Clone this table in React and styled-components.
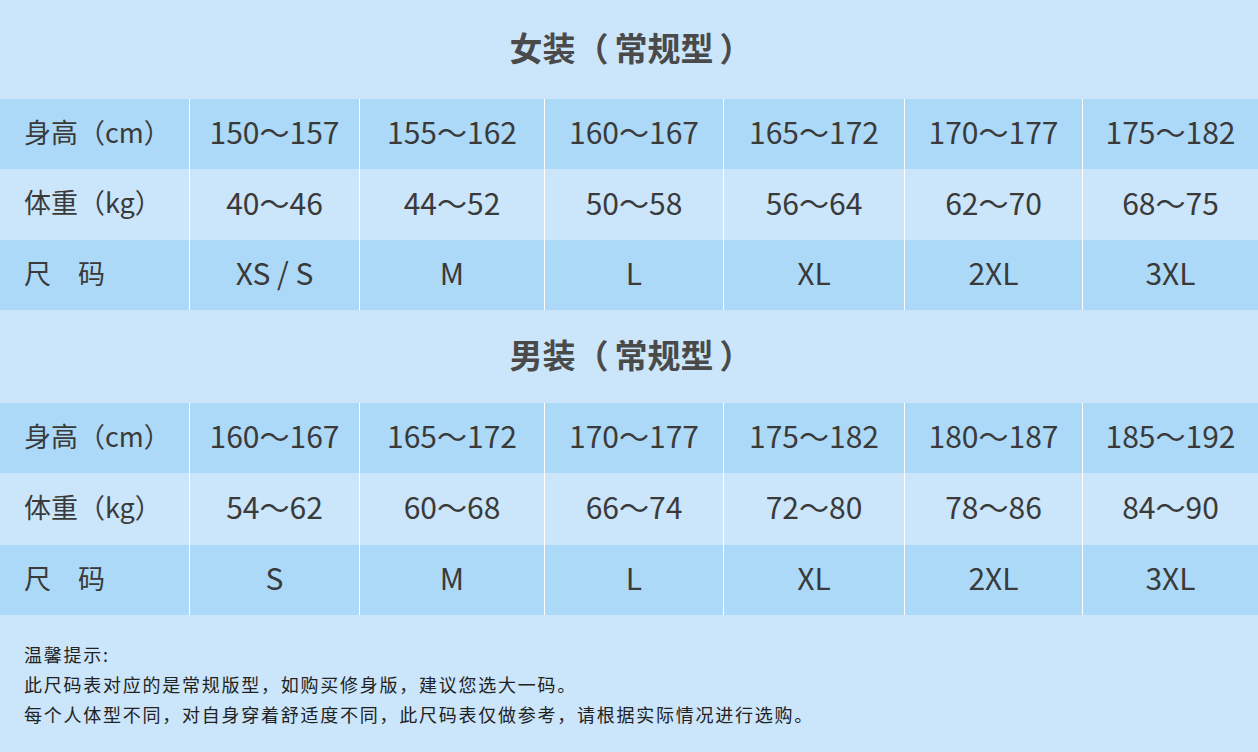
import React from 'react';
import styled, { createGlobalStyle } from 'styled-components';

const GlobalStyle = createGlobalStyle`
  html, body {
    margin: 0;
    padding: 0;
    background-color: #cbe5fa;
  }
  body {
    font-family: "Noto Sans CJK SC", "Noto Sans", sans-serif;
  }
`;

const Page = styled.div`
  width: 1258px;
  height: 752px;
  background-color: #cbe5fa;
  color: #3a3a3a;
  overflow: hidden;
`;

const SectionTitle = styled.h2`
  margin: 0;
  height: ${(p) => p.h}px;
  display: flex;
  align-items: center;
  justify-content: center;
  font-size: 33px;
  font-weight: 700;
  color: #4a4a4a;
  padding: 0 0 5px 4px;
  box-sizing: border-box;
`;

const Paren = styled.span`
  margin: ${(p) => (p.open ? '0 6px 0 0' : '0 0 0 6px')};
`;

const Table = styled.div`
  display: grid;
  grid-template-columns: 189px 170px 185px 179px 181px 178px 1fr;
  grid-auto-rows: ${(p) => p.rows};
`;

const Cell = styled.div`
  display: flex;
  align-items: center;
  justify-content: center;
  box-sizing: border-box;
  padding-bottom: 6px;
  background-color: ${(p) => (p.dark ? '#add9f8' : '#cbe5fa')};
  border-left: 1px solid #ffffff;
  font-size: 30px;
  color: #3a3a3a;
  white-space: nowrap;
`;

const LabelCell = styled(Cell)`
  justify-content: flex-start;
  padding-left: 24px;
  border-left: none;
  font-size: 27px;
`;

const Notes = styled.div`
  padding: 24px 0 0 24px;
  font-size: 18px;
  line-height: 30px;
  letter-spacing: 1.75px;
  color: #222222;
`;

const NoteLine = styled.p`
  margin: 0;
`;

const women = [
  { label: '身高（cm）', values: ['150～157', '155～162', '160～167', '165～172', '170～177', '175～182'] },
  { label: '体重（kg）', values: ['40～46', '44～52', '50～58', '56～64', '62～70', '68～75'] },
  { label: '尺　码', values: ['XS / S', 'M', 'L', 'XL', '2XL', '3XL'] },
];

const men = [
  { label: '身高（cm）', values: ['160～167', '165～172', '170～177', '175～182', '180～187', '185～192'] },
  { label: '体重（kg）', values: ['54～62', '60～68', '66～74', '72～80', '78～86', '84～90'] },
  { label: '尺　码', values: ['S', 'M', 'L', 'XL', '2XL', '3XL'] },
];

const SizeTable = ({ data, rows }) => (
  <Table rows={rows}>
    {data.map((row, i) => (
      <React.Fragment key={row.label}>
        <LabelCell dark={i !== 1}>{row.label}</LabelCell>
        {row.values.map((v, j) => (
          <Cell key={j} dark={i !== 1}>
            {v}
          </Cell>
        ))}
      </React.Fragment>
    ))}
  </Table>
);

const Title = ({ h, children }) => (
  <SectionTitle h={h}>
    {children}
    <Paren open>（</Paren>常规型<Paren>）</Paren>
  </SectionTitle>
);

export default function App() {
  return (
    <Page>
      <GlobalStyle />
      <Title h={99}>女装</Title>
      <SizeTable data={women} rows="70px 71px 70px" />
      <Title h={93}>男装</Title>
      <SizeTable data={men} rows="70px 72px 70px" />
      <Notes>
        <NoteLine>温馨提示:</NoteLine>
        <NoteLine>此尺码表对应的是常规版型，如购买修身版，建议您选大一码。</NoteLine>
        <NoteLine>每个人体型不同，对自身穿着舒适度不同，此尺码表仅做参考，请根据实际情况进行选购。</NoteLine>
      </Notes>
    </Page>
  );
}
